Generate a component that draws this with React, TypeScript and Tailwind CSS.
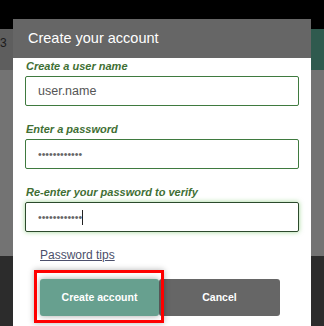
import React from 'react';

const font = { fontFamily: '"Liberation Sans", Arial, sans-serif' };

function Field({ label, children }: { label: string; children: React.ReactNode }) {
  return (
    <div className="flex flex-col">
      <label className="text-[11px] leading-[14px] font-bold italic text-[#3f6f34] mb-[3px] pl-[1px]">{label}</label>
      {children}
    </div>
  );
}

export default function App() {
  return (
    <div className="relative w-[324px] h-[326px] overflow-hidden flex flex-col" style={font}>
      {/* page behind the dialog */}
      <div className="h-[29px] bg-black" />
      <div className="h-[41px] flex">
        <div className="flex-1 bg-[#5e5e5e] flex items-start pt-[5px]">
          <span className="ml-0 text-[12px] text-[#1c1c1c]">3</span>
        </div>
        <div className="w-[13px] bg-[#2f5a4e]" />
      </div>
      <div className="h-[186px] bg-[#737373]" />
      <div className="flex-1 bg-[#2c2c2c]" />

      {/* dialog */}
      <div className="absolute left-[13px] top-[19px] w-[298px] bottom-0 bg-white flex flex-col">
        <div className="h-[39px] bg-[#666666] flex items-center pl-[15px]">
          <h1 className="text-[14.5px] text-white">Create your account</h1>
        </div>
        <div className="flex flex-col px-[12px] pt-[1px]">
          <Field label="Create a user name">
            <input
              readOnly
              defaultValue="user.name"
              className="h-[30px] border border-[#3f7a3f] rounded-[2px] px-[12px] text-[12.5px] text-[#555] outline-none"
            />
          </Field>
          <div className="mt-[16px]">
            <Field label="Enter a password">
              <input
                readOnly
                type="password"
                defaultValue="passwordabc1"
                className="h-[30px] border border-[#3f7a3f] rounded-[2px] px-[12px] text-[10.5px] text-[#666] outline-none"
              />
            </Field>
          </div>
          <div className="mt-[16px]">
            <Field label="Re-enter your password to verify">
              <div className="relative">
                <input
                  readOnly
                  type="password"
                  defaultValue="passwordabc1"
                  className="w-full h-[30px] border border-[#2c4a2c] rounded-[2px] px-[12px] text-[10.5px] text-[#666] outline-none shadow-[0_0_5px_rgba(80,180,60,0.55)]"
                />
                <span className="absolute left-[57px] top-[8px] w-px h-[15px] bg-[#222]" />
              </div>
            </Field>
          </div>
          <a href="#" className="mt-[16px] ml-[15px] text-[12px] leading-[15px] text-[#4b4f6b] underline self-start">
            Password tips
          </a>
          <div className="mt-[16px] ml-[15px] flex">
            <div className="relative">
              <button className="w-[119px] h-[37px] bg-[#67a08f] text-white text-[10.5px] font-bold rounded-[3px] shadow-[0_0_6px_rgba(0,0,0,0.35)]">
                Create account
              </button>
              <span className="absolute -left-[6px] -top-[9px] w-[130px] h-[53px] border-[3px] border-[#ff0000] shadow-[0_0_6px_rgba(0,0,0,0.3)] pointer-events-none" />
            </div>
            <button className="w-[121px] h-[37px] bg-[#666666] text-white text-[10.5px] font-bold rounded-[3px]">
              Cancel
            </button>
          </div>
        </div>
      </div>
    </div>
  );
}
